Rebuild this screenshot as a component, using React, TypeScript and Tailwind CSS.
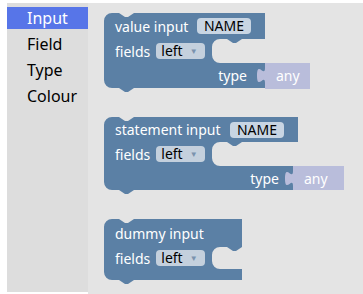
import React from 'react';

const BLOCK = '#5b80a5';
const ANY = '#b9bddb';

type Shape = { w1: number; h1: number; c: number; h2: number; w3: number; h3: number };

// blockly-style outline: top row, statement cutout, bottom arm
function blockPath({ w1, h1, c, h2, w3, h3 }: Shape) {
  const y2 = h1 + h2;
  const y3 = y2 + h3;
  return `M0,8 A8,8 0 0,1 8,0 H15 l6,4 3,0 6,-4 H${w1} V${h1} H${c + 30} l-6,4 -3,0 -6,-4 H${c + 8} a8,8 0 0,0 -8,8 V${y2 - 8} a8,8 0 0,0 8,8 H${w3} V${y3} H30 l-6,4 -3,0 -6,-4 H8 a8,8 0 0,1 -8,-8 Z`;
}

const NameBox = () => (
  <span className="ml-auto mr-[14px] h-[16px] w-[54px] shrink-0 text-center leading-[16px] rounded-[4px] bg-[#c8d5e3] text-black">NAME</span>
);

const Dropdown = () => (
  <span className="h-[16px] w-[49px] rounded-[4px] bg-[#c4d0dd] flex items-center pl-[5px] text-black leading-[16px]">
    left
    <span className="ml-[7px] text-[8px] text-[#7a93ae]">▼</span>
  </span>
);

const AnyBlock = ({ w, h }: { w: number; h: number }) => (
  <div className="relative flex items-center h-full pl-[11px]" style={{ width: w }}>
    <svg className="absolute left-0 top-0 overflow-visible" width={w} height={h}>
      <path d={`M0,0 H${w} V${h} H0 V20 c0,-10 -8,8 -8,-7.5 s8,2.5 8,-7.5 Z`} fill={ANY} />
    </svg>
    <span className="relative text-white">any</span>
  </div>
);

const BlockShape = ({ shape }: { shape: Shape }) => (
  <svg className="absolute left-0 top-0 overflow-visible" width={Math.max(shape.w1, shape.w3)} height={shape.h1 + shape.h2 + shape.h3}>
    <path d={blockPath(shape)} fill={BLOCK} />
  </svg>
);

const items = ['Input', 'Field', 'Type', 'Colour'];

export default function App() {
  return (
    <div className="w-[363px] h-[294px] bg-white pt-[3px] pl-[7px] flex font-['Noto_Sans','Open_Sans',sans-serif]">
      <div className="w-[81px] h-[289px] bg-[#dddddd] pt-[4px] flex flex-col gap-[4px]">
        {items.map((it, i) => (
          <div
            key={it}
            className={i === 0 ? 'h-[22px] leading-[22px] pl-[20px] text-[16px] bg-[#5775e8] text-white' : 'h-[22px] leading-[22px] pl-[20px] text-[16px] text-black'}
          >
            {it}
          </div>
        ))}
      </div>

      <div className="relative flex-1 h-[291px] bg-[#e4e4e4] text-[14px] text-white">
        {/* value input */}
        <div className="absolute left-[16px] top-[10px] w-[206px]">
          <BlockShape shape={{ w1: 161, h1: 26, c: 108, h2: 24, w3: 161, h3: 25 }} />
          <div className="relative flex flex-col">
            <div className="w-[161px] h-[26px] flex items-center pl-[11px]">
              <span className="whitespace-nowrap">value input</span>
              <NameBox />
            </div>
            <div className="h-[24px] flex items-center gap-[6px] pl-[11px]">
              <span>fields</span>
              <Dropdown />
            </div>
            <div className="h-[25px] flex items-center justify-end">
              <span className="mr-[18px]">type</span>
              <AnyBlock w={45} h={26} />
            </div>
          </div>
        </div>

        {/* statement input */}
        <div className="absolute left-[16px] top-[114px] w-[240px]">
          <BlockShape shape={{ w1: 194, h1: 25, c: 108, h2: 24, w3: 189, h3: 24 }} />
          <div className="relative flex flex-col">
            <div className="w-[194px] h-[25px] flex items-center pl-[11px]">
              <span className="whitespace-nowrap">statement input</span>
              <NameBox />
            </div>
            <div className="h-[24px] flex items-center gap-[6px] pl-[11px]">
              <span>fields</span>
              <Dropdown />
            </div>
            <div className="h-[24px] flex items-center justify-end">
              <span className="mr-[14px]">type</span>
              <AnyBlock w={51} h={24} />
            </div>
          </div>
        </div>

        {/* dummy input */}
        <div className="absolute left-[16px] top-[216px] w-[138px]">
          <BlockShape shape={{ w1: 138, h1: 28, c: 108, h2: 22, w3: 138, h3: 11 }} />
          <div className="relative flex flex-col">
            <div className="h-[28px] flex items-center pl-[11px]">
              <span>dummy input</span>
            </div>
            <div className="h-[22px] flex items-center gap-[6px] pl-[11px]">
              <span>fields</span>
              <Dropdown />
            </div>
          </div>
        </div>
      </div>
    </div>
  );
}
